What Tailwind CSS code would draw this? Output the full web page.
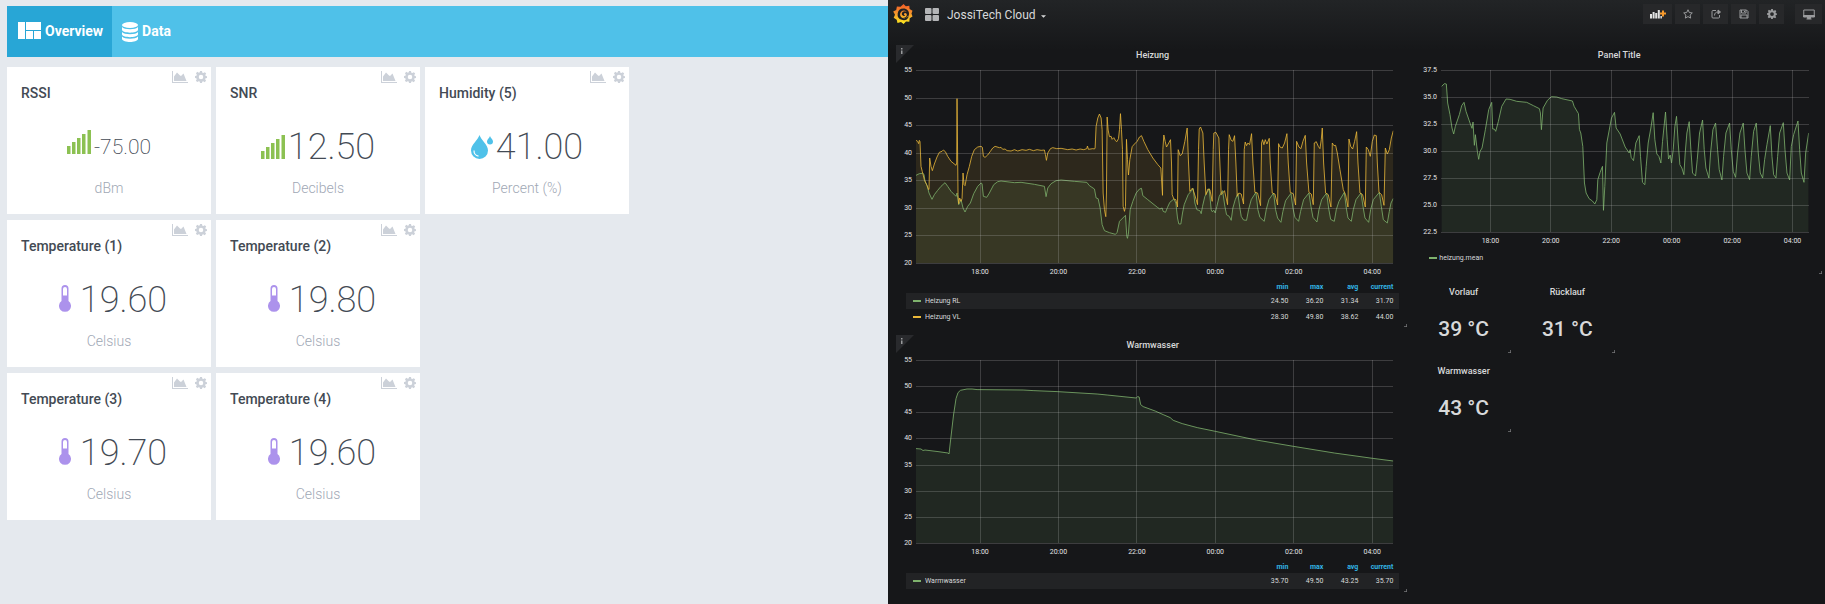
<!DOCTYPE html>
<html lang="en">
<head>
<meta charset="utf-8">
<title>Sensor dashboards</title>
<script src="https://cdn.jsdelivr.net/npm/@tailwindcss/browser@4"></script>
</head>
<body class="min-h-screen grid grid-cols-[888fr_937fr] font-['Roboto',sans-serif] overflow-hidden">

<svg class="hidden" aria-hidden="true">
  <symbol id="area" viewBox="0 0 16 12"><path d="M0 0h1v11h15v1H0zM2 10V5.500L5 1.500l3 3 1 .5 2.500-2.500L14.500 10z"/></symbol>
  <symbol id="gear" viewBox="0 0 24 24"><path fill-rule="evenodd" d="M10 0h4l.7 3.300 2 .8L19.600 2.300l2.800 2.800-1.800 2.900.8 2L24 10.500v3.500l-2.900.6-.8 2 1.800 2.900-2.800 2.800-2.900-1.800-2 .8L14 24h-4l-.6-2.900-2-.8-2.900 1.800-2.800-2.800 1.800-2.900-.8-2L0 14v-4l2.900-.6.8-2-1.800-2.900 2.800-2.800 2.900 1.800 2-.8zM12 7.500a4.500 4.500 0 1 0 0 9 4.500 4.500 0 0 0 0-9z"/></symbol>
  <symbol id="bars" viewBox="0 0 24 24"><path d="M0 16h3.500v8H0zM5 12h3.500v12H5zM10 8h3.500v16H10zM15 4h3.500v20H15zM20.500 0H24v24h-3.500z"/></symbol>
  <symbol id="thermo" viewBox="0 0 12 27"><path fill-rule="evenodd" d="M2.500 3.500a3.500 3.500 0 0 1 7 0V16a6 6 0 1 1-7 0zM4 4v6.500h4V4a2 2 0 0 0-4 0z"/></symbol>
  <symbol id="drops" viewBox="0 0 22 24"><path d="M8.500 0C10 5 17 9.500 17 15.500a8.500 8.500 0 0 1-17 0C0 9.500 7 5 8.500 0zM19 1c.6 2 3 3.400 3 5.500a3 3 0 0 1-6 0C16 4.400 18.400 3 19 1z"/><path d="M3 15.500a5.500 5.500 0 0 0 4.500 5.700" fill="none" stroke="#fff" stroke-width="1.200"/></symbol>
  <symbol id="corner" viewBox="0 0 4 4"><path d="M0 4h4V0H3v3H0z"/></symbol>
</svg>

<!-- Sensor overview -->
<section class="bg-[#e5e9ee] pl-[7px] pt-[6px]">
  <nav class="flex h-[51px] bg-[#4fc1e9] text-white text-[14px] font-bold">
    <a href="#overview" class="flex items-center gap-1 bg-[#28a6d6] pl-[11px] pr-[9px]">
      <svg class="w-[23px] h-[17px] -mt-[2px]" viewBox="0 0 23 17" fill="#fff"><path d="M0 0h7v17H0zM8 0h15v8H8zM8 9h7v8H8zM16 9h7v8h-7z"/></svg>
      Overview</a>
    <a href="#data" class="flex items-center gap-1 pl-[10px] pr-[10px]">
      <svg class="w-[16px] h-[20px]" viewBox="0 0 16 20" fill="#fff"><ellipse cx="8" cy="3" rx="8" ry="3"/><path d="M0 5c2 3 14 3 16 0v3c-1 3.500-15 3.500-16 0zM0 10c2 3 14 3 16 0v2.500c-1 3.500-15 3.500-16 0zM0 14.500c2 3 14 3 16 0V17c-1 4-15 4-16 0z"/></svg>
      Data</a>
  </nav>
  <main id="cards" class="mt-[10px] grid grid-cols-[repeat(3,204px)] gap-x-[5px] gap-y-[6px]"></main>
</section>

<template id="card">
  <article class="min-h-[147px] bg-white text-[#434a54]">
    <div class="flex justify-end items-center gap-[7px] h-4 pt-1 pr-1 text-[#ccd1d9]">
      <button aria-label="Chart"><svg class="block w-4 h-3" fill="currentColor"><use href="#area"/></svg></button>
      <button aria-label="Settings"><svg class="block w-3 h-3" fill="currentColor"><use href="#gear"/></svg></button>
    </div>
    <h2 class="pl-[14px] text-[14px] leading-5 font-medium"></h2>
    <p class="mt-[26px] h-9 flex justify-center items-baseline leading-9 font-extralight"></p>
    <p class="mt-[13px] text-center text-[14px] leading-5 font-light text-[#9fa8b5]"></p>
  </article>
</template>

<!-- Heating dashboard -->
<section class="bg-[#161719] bg-[linear-gradient(#222426,#161719_50px)] text-[#d8d9da]">
  <header class="flex items-center h-[28px] pl-[5px] pr-[3px] mb-[17px] gap-1">
    <a href="#home" aria-label="Home" class="mr-[8px]"><svg class="w-5 h-5" viewBox="0 0 20 20">
      <defs><linearGradient id="flame" x1="0" y1="1" x2="0" y2="0"><stop stop-color="#fcee1f"/><stop offset=".5" stop-color="#f79a2c"/><stop offset="1" stop-color="#f05a28"/></linearGradient></defs>
      <path fill="url(#flame)" fill-rule="evenodd" d="M10.500 0l2.300 2.300 3.500-.5.300 3.200 2.900 1.800-1 2.800 1 3-2.800 1.700-.4 3.400-3.300-.2L10.600 20l-2.600-1.900-3.500 1-.8-3.400-3-1.900 1.300-3L.2 7.600l3-1.500.7-3.600 3.600.2zM10.500 4.500a5.800 5.800 0 1 0 5.200 8.200l-1.300-.5a3.900 3.900 0 1 1-.4-4.200c-1.500-1.300-5-1-5.200 1.800-.1 2.200 2.700 2.800 3.500 1.300-1.500.1-1.700-1.300-.8-1.900 1.200-.7 2.600.3 2.300 2.100-.5 2.300-2.700 2.800-4.200 2.100 2.500 1.500 6 .2 6.400-3.200.3-3-2.200-5.700-5.500-5.700z"/></svg></a>
    <svg class="w-[14px] h-[13px]" viewBox="0 0 14 13" fill="#b4b5b7"><rect width="6.500" height="6" rx="1"/><rect x="7.500" width="6.500" height="6" rx="1"/><rect y="7" width="6.500" height="6" rx="1"/><rect x="7.500" y="7" width="6.500" height="6" rx="1"/></svg>
    <button class="flex items-center gap-[5px] pl-1 pt-px text-[12px]">JossiTech Cloud
      <svg class="w-[5px] h-[3px] mt-1" viewBox="0 0 6 3" fill="#d8d9da"><path d="M0 0h6L3 3z"/></svg></button>
    <div class="ml-auto flex gap-[3px] text-[#9a9b9d] *:h-[20px] *:bg-[#27282a] *:flex *:items-center *:justify-center">
      <button aria-label="Add panel" class="w-[29px]"><svg class="w-4 h-[10px]" viewBox="0 0 16 10"><path fill="#e3e3e3" d="M0 5h2v4.500H0zM2.600 3h2v6.500h-2zM5.200 4h2v5.500h-2zM7.800 1h2v8.500h-2zM10.400 7h1.500v2.500h-1.500z"/><path d="M13 1.500v6M10 4.500h6" stroke="#f79a2c" stroke-width="2"/></svg></button>
      <button aria-label="Star" class="w-[25px]"><svg class="w-[10px] h-[10px]" viewBox="0 0 20 20" fill="none" stroke="currentColor" stroke-width="2"><path d="M10 1.500l2.600 5.600 6 .8-4.400 4.200 1.100 6.100-5.300-3-5.300 3 1.100-6.100L1.400 7.900l6-.8z"/></svg></button>
      <button aria-label="Share" class="w-[25px]"><svg class="w-[10px] h-[10px]" viewBox="0 0 20 20" fill="none" stroke="currentColor" stroke-width="2"><path d="M10 3H4a2 2 0 0 0-2 2v11a2 2 0 0 0 2 2h11a2 2 0 0 0 2-2v-4M7 13c0-5 3-7 7-7"/><path fill="currentColor" d="M14 2l5 4-5 4z"/></svg></button>
      <button aria-label="Save" class="w-[25px]"><svg class="w-[10px] h-[10px]" viewBox="0 0 20 20" fill="none" stroke="currentColor" stroke-width="2"><path d="M2 2h13l3 3v13H2zM5 2v6h9V2M4 18v-6h12v6M11 4v2"/></svg></button>
      <button aria-label="Settings" class="w-[25px]"><svg class="w-[10px] h-[10px]" fill="currentColor"><use href="#gear"/></svg></button>
      <button aria-label="Cycle view" class="w-[27px] ml-2"><svg class="w-3 h-[11px]" viewBox="0 0 24 22" fill="none" stroke="currentColor" stroke-width="2"><path d="M1.500 2h21v13h-21z"/><path d="M1 13h22v3H1zM9 16h6v3H9zM7 20h10" fill="currentColor"/></svg></button>
    </div>
  </header>

  <main class="grid grid-cols-9 gap-[5px] pl-2 pr-px">
    <div class="col-span-5 flex flex-col gap-[5px]">
      <article class="relative min-h-[285px]">
        <svg class="absolute left-0 top-0 w-[18px] h-[18px]" viewBox="0 0 18 18"><path fill="#292a2d" d="M0 0h18L0 18z"/><path fill="#9a9b9d" d="M5 3h1.500v1.500H5zM5 5.500h1.500V9H5z"/></svg>
        <h2 class="text-center text-[9px] leading-5 font-medium">Heizung</h2>
        <svg data-chart="heizung" class="block ml-5 w-[calc(100%-36px)] mt-[5px] h-[212px] overflow-visible"></svg>
        <table class="ml-[10px] w-[calc(100%-20px)] text-[7px] leading-[16px]">
          <thead><tr class="text-[#33b5e5] text-right leading-[11px]"><td></td><th class="w-[35px]">min</th><th class="w-[35px]">max</th><th class="w-[35px]">avg</th><th class="w-[41px] pr-[6px]">current</th></tr></thead>
          <tbody class="text-right">
            <tr class="bg-[#222325]"><th class="pl-[7px] text-left font-normal"><i class="inline-block w-2 h-[2px] mr-1 align-middle bg-[#7eb26d]"></i>Heizung RL</th><td>24.50</td><td>36.20</td><td>31.34</td><td class="pr-[6px]">31.70</td></tr>
            <tr><th class="pl-[7px] text-left font-normal"><i class="inline-block w-2 h-[2px] mr-1 align-middle bg-[#eab839]"></i>Heizung VL</th><td>28.30</td><td>49.80</td><td>38.62</td><td class="pr-[6px]">44.00</td></tr>
          </tbody>
        </table>
        <svg class="absolute right-[2px] bottom-[3px] w-[3px] h-[3px]" fill="#77787a"><use href="#corner"/></svg>
      </article>
      <article class="relative min-h-[260px]">
        <svg class="absolute left-0 top-0 w-[18px] h-[18px]" viewBox="0 0 18 18"><path fill="#292a2d" d="M0 0h18L0 18z"/><path fill="#9a9b9d" d="M5 3h1.500v1.500H5zM5 5.500h1.500V9H5z"/></svg>
        <h2 class="text-center text-[9px] leading-5 font-medium">Warmwasser</h2>
        <svg data-chart="warmwasser" class="block ml-5 w-[calc(100%-36px)] mt-[5px] h-[202px] overflow-visible"></svg>
        <table class="ml-[10px] w-[calc(100%-20px)] text-[7px] leading-[16px]">
          <thead><tr class="text-[#33b5e5] text-right leading-[11px]"><td></td><th class="w-[35px]">min</th><th class="w-[35px]">max</th><th class="w-[35px]">avg</th><th class="w-[41px] pr-[6px]">current</th></tr></thead>
          <tbody class="text-right">
            <tr class="bg-[#222325]"><th class="pl-[7px] text-left font-normal"><i class="inline-block w-2 h-[2px] mr-1 align-middle bg-[#7eb26d]"></i>Warmwasser</th><td>35.70</td><td>49.50</td><td>43.25</td><td class="pr-[6px]">35.70</td></tr>
          </tbody>
        </table>
        <svg class="absolute right-[2px] bottom-[3px] w-[3px] h-[3px]" fill="#77787a"><use href="#corner"/></svg>
      </article>
    </div>

    <div class="col-span-4 grid grid-cols-4 content-start gap-[5px]">
      <article class="relative col-span-4 min-h-[232px]">
        <h2 class="text-center text-[9px] leading-5 font-medium">Panel Title</h2>
        <svg data-chart="mean" class="block ml-[27px] w-[calc(100%-42px)] mt-[5px] h-[180px] overflow-visible"></svg>
        <p class="pl-[15px] text-[7px] leading-4"><i class="inline-block w-2 h-[2px] mr-[2px] align-middle bg-[#7eb26d]"></i>heizung.mean</p>
        <svg class="absolute right-[2px] bottom-[3px] w-[3px] h-[3px]" fill="#77787a"><use href="#corner"/></svg>
      </article>
      <article class="relative min-h-[74px] text-center font-medium">
        <h2 class="text-[9px] leading-5">Vorlauf</h2><p class="mt-[14px] text-[21px] leading-[26px]">39 °C</p>
        <svg class="absolute right-[2px] bottom-[3px] w-[3px] h-[3px]" fill="#77787a"><use href="#corner"/></svg>
      </article>
      <article class="relative min-h-[74px] text-center font-medium">
        <h2 class="text-[9px] leading-5">Rücklauf</h2><p class="mt-[14px] text-[21px] leading-[26px]">31 °C</p>
        <svg class="absolute right-[2px] bottom-[3px] w-[3px] h-[3px]" fill="#77787a"><use href="#corner"/></svg>
      </article>
      <article class="relative col-start-1 min-h-[74px] text-center font-medium">
        <h2 class="text-[9px] leading-5">Warmwasser</h2><p class="mt-[14px] text-[21px] leading-[26px]">43 °C</p>
        <svg class="absolute right-[2px] bottom-[3px] w-[3px] h-[3px]" fill="#77787a"><use href="#corner"/></svg>
      </article>
    </div>
  </main>
</section>

<script>
const icons = {
  bars: '<svg class="w-6 h-6 mb-[3px] mr-[3px] shrink-0" fill="#8cc152"><use href="#bars"/></svg>',
  drops: '<svg class="w-[22px] h-6 mb-[3px] mr-[3px] shrink-0" fill="#4fc1e9"><use href="#drops"/></svg>',
  thermo: '<svg class="w-3 h-[27px] mb-px ml-2 mr-[9px] shrink-0" fill="#ac92ec"><use href="#thermo"/></svg>'
};
[
  ['RSSI', 'bars', '-75.00', 'dBm'], ['SNR', 'bars', '12.50', 'Decibels'], ['Humidity (5)', 'drops', '41.00', 'Percent (%)'],
  ['Temperature (1)', 'thermo', '19.60', 'Celsius'], ['Temperature (2)', 'thermo', '19.80', 'Celsius'],
  ['Temperature (3)', 'thermo', '19.70', 'Celsius'], ['Temperature (4)', 'thermo', '19.60', 'Celsius']
].forEach(([title, icon, value, unit], i) => {
  const card = document.getElementById('card').content.cloneNode(true).firstElementChild;
  const [v, u] = card.querySelectorAll('p');
  card.querySelector('h2').textContent = title;
  v.innerHTML = icons[icon] + '<span>' + value + '</span>';
  v.classList.add(title === 'RSSI' ? 'text-[21px]' : 'text-[36px]');
  u.textContent = unit;
  if (i === 5) card.classList.add('col-start-1');
  document.getElementById('cards').append(card);
});

// Series are listed as x,y pairs in the units of each chart's box.
const green = '#7eb26d', orange = '#eab839';
const charts = {
  heizung: { h: 193, box: [1431, 579], y: ['55','50','45','40','35','30','25','20'], first: 13.42, step: 16.43, series: [
    [green, '0,316 10,311 20,310 24,313 27,334 33,346 39,369 48,388 55,374 65,361 75,349 87,338 95,349 105,364 120,379 123,369 128,404 135,389 141,414 147,426 155,409 163,399 173,371 185,349 195,339 198,341 202,379 212,382 220,369 233,344 245,335 255,333 295,338 315,337 355,343 385,349 390,380 395,354 405,341 420,332 435,330 475,334 512,337 520,347 535,357 540,384 546,386 552,414 558,464 565,482 580,488 598,493 603,487 610,454 620,444 628,436 632,499 634,505 637,489 642,419 650,394 660,369 670,357 676,355 680,377 695,389 725,413 731,417 738,414 741,424 748,427 754,412 761,397 773,387 779,399 784,444 788,462 794,462 799,429 804,404 816,374 831,356 836,399 842,419 851,422 855,431 859,409 866,379 879,356 885,419 888,425 893,421 897,429 902,409 909,379 919,362 926,409 931,434 939,439 945,451 950,414 957,389 965,371 971,414 975,439 982,450 991,451 997,419 1005,389 1019,367 1025,419 1031,442 1044,454 1050,419 1058,389 1072,369 1078,419 1084,444 1094,457 1100,424 1108,392 1124,370 1130,414 1136,442 1147,454 1153,424 1162,389 1178,369 1184,409 1190,442 1202,456 1208,419 1216,389 1231,369 1237,414 1243,448 1254,454 1260,419 1268,394 1284,367 1290,414 1295,444 1305,454 1311,419 1319,389 1334,369 1340,409 1346,444 1357,457 1363,419 1371,389 1389,367 1395,409 1401,449 1413,459 1419,424 1424,399 1431,385'],
    [orange, '0,211 5,214 8,221 10,211 12,215 15,289 19,305 25,329 32,344 38,359 39,357 41,264 45,289 49,302 55,282 63,261 70,247 78,244 82,240 88,245 95,259 105,274 120,286 122,279 123,86 125,279 126,374 128,401 131,384 135,394 138,386 141,309 144,344 147,347 153,314 160,289 167,259 175,239 185,231 195,229 199,232 202,259 207,262 215,255 223,244 230,234 237,229 250,233 255,232 260,238 267,237 273,242 285,243 295,239 305,243 318,239 330,241 340,238 352,242 363,239 375,241 385,240 388,254 391,271 395,249 403,236 410,233 422,236 435,235 455,239 468,237 480,240 492,237 503,239 512,236 514,228 517,238 530,236 535,237 537,234 540,169 545,144 550,132 555,144 558,179 561,369 565,419 569,440 571,369 573,141 576,180 580,200 585,199 588,208 593,203 598,212 602,215 607,206 610,179 613,131 616,179 619,239 621,409 625,424 628,409 631,208 634,269 637,315 641,269 648,230 655,222 663,214 670,201 676,197 683,214 695,239 710,264 725,284 734,294 739,376 740,239 743,195 747,214 751,231 756,222 763,209 766,279 768,374 773,387 779,389 784,411 786,239 792,257 798,252 806,214 813,174 817,279 821,364 829,354 834,369 840,389 844,404 847,239 849,177 853,171 860,189 864,279 869,374 875,357 881,359 888,394 891,239 893,189 899,187 908,204 911,279 915,374 925,362 934,404 937,239 939,194 945,211 950,214 955,197 959,279 963,379 968,369 975,372 982,402 984,239 987,216 991,227 995,219 1000,224 1006,191 1010,279 1016,367 1024,369 1033,407 1036,219 1039,209 1043,224 1047,209 1052,222 1059,205 1062,279 1068,369 1076,372 1084,405 1087,221 1091,231 1098,234 1105,219 1112,191 1116,279 1122,367 1131,371 1138,405 1141,214 1148,231 1154,236 1160,214 1167,196 1171,279 1178,367 1185,372 1191,404 1194,219 1200,215 1206,229 1211,236 1215,209 1218,174 1222,279 1228,369 1236,374 1244,411 1248,219 1253,227 1258,226 1263,249 1271,299 1281,359 1288,374 1295,411 1298,207 1303,229 1309,237 1315,214 1321,185 1325,279 1331,369 1339,374 1347,411 1350,231 1356,239 1362,259 1368,214 1374,195 1380,197 1383,279 1388,367 1396,374 1403,406 1407,234 1413,252 1419,239 1425,204 1431,182']] },
  warmwasser: { h: 183, box: [477, 183], y: ['55','50','45','40','35','30','25','20'], first: 13.42, step: 16.43, series: [
    [green, '0,88.6 5,89 7,90.5 9,90 22,91.6 32,93 33,94 34,85 37.5,55 40,38.6 42,32.6 44.5,30.3 51,29 56,29 61,29.6 107,30 117,30.6 141,31.6 181,34 191,35 220,38 221.5,36.6 223,37 224.5,44.6 227,46.6 239,51 247,54.6 254,57.6 257,60.3 266,63.6 281,67.6 299,71.3 340,80 377,86.3 418,93 456,98.3 477,101']] },
  mean: { h: 162, box: [1102, 486], y: ['37.5','35.0','32.5','30.0','27.5','25.0','22.5'], first: 13.43, step: 16.44, series: [
    [green, '2,49 10,41 16,42 20,99 27,134 33,174 38,192 43,169 55,134 62,107 69,97 75,124 87,159 93,175 96,156 100,226 103,194 109,244 113,268 117,244 123,234 133,179 143,119 152,97 155,177 160,177 164,184 172,154 182,109 195,87 207,88 227,94 257,97 277,107 295,116 298,129 301,179 306,114 319,91 331,80 347,81 362,86 394,93 399,109 412,131 415,179 419,189 425,229 430,339 435,369 444,386 454,393 461,402 467,389 470,329 477,307 484,289 487,421 491,349 497,219 511,144 520,127 525,174 537,192 552,231 564,249 567,239 570,262 577,272 584,219 594,197 598,259 604,337 611,344 615,289 621,219 629,174 636,128 641,209 647,252 653,259 659,279 664,214 673,126 678,209 682,267 687,255 691,279 696,239 701,169 706,139 711,219 716,284 722,294 728,314 732,249 737,189 744,155 749,239 754,309 763,318 768,269 775,189 784,150 789,239 794,294 803,324 808,249 815,179 823,159 829,239 834,299 842,330 847,259 854,189 865,159 870,239 876,304 883,322 889,249 896,189 906,159 911,239 917,309 925,329 930,259 937,184 945,159 951,249 957,309 964,324 970,269 977,224 987,167 992,259 997,314 1004,324 1009,259 1015,189 1026,158 1031,239 1037,309 1045,330 1050,229 1057,194 1070,153 1075,239 1080,309 1088,337 1093,249 1102,189']] }
};
const hours = ['18:00', '20:00', '22:00', '00:00', '02:00', '04:00'];
document.querySelectorAll('[data-chart]').forEach(el => {
  const c = charts[el.dataset.chart], [w, h] = c.box;
  let out = `<svg width="100%" height="${c.h}" viewBox="0 0 ${w} ${h}" preserveAspectRatio="none">`;
  for (const [color, pts] of c.series) {
    const x0 = pts.split(',')[0];
    out += `<polygon points="${x0},${h} ${pts} ${w},${h}" fill="${color}" fill-opacity=".11"/>`;
  }
  for (const [color, pts] of c.series)
    out += `<polyline points="${pts}" fill="none" stroke="${color}" stroke-opacity=".8" vector-effect="non-scaling-stroke"/>`;
  out += '</svg><g stroke="#c8c8c8" stroke-opacity=".22" shape-rendering="crispEdges">';
  const rowY = i => Math.round(i * c.h / (c.y.length - 1));
  c.y.forEach((_, i) => out += `<line x1="0" x2="100%" y1="${rowY(i)}" y2="${rowY(i)}"/>`);
  hours.forEach((_, i) => out += `<line x1="${c.first + i * c.step}%" x2="${c.first + i * c.step}%" y1="0" y2="${c.h}"/>`);
  out += '</g><g fill="#e3e4e5" font-size="7">';
  c.y.forEach((t, i) => out += `<text x="-4" y="${rowY(i) + 2}" text-anchor="end">${t}</text>`);
  hours.forEach((t, i) => out += `<text x="${c.first + i * c.step}%" y="${c.h + 11}" text-anchor="middle">${t}</text>`);
  el.innerHTML = out + '</g>';
});
</script>
</body>
</html>
